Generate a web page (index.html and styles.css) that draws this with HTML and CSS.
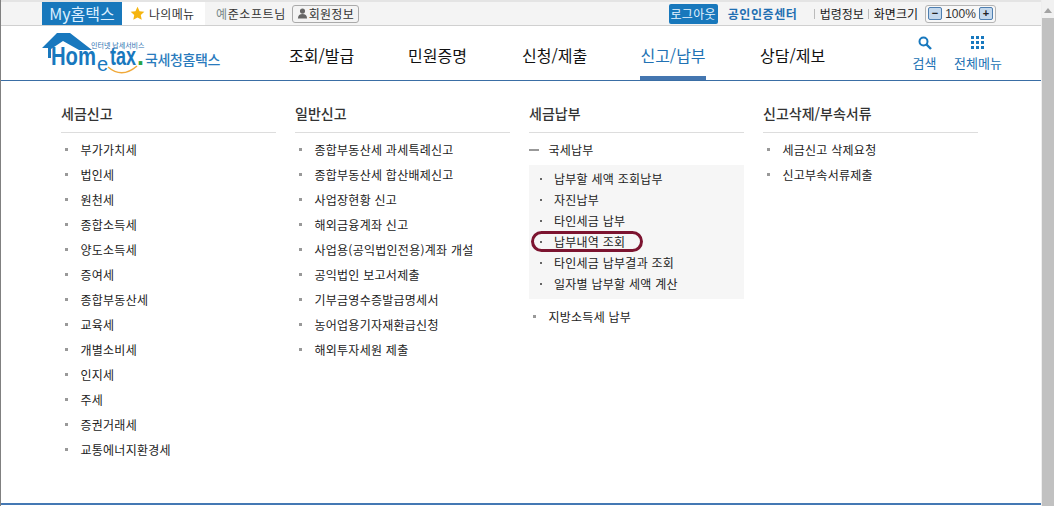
FILE: index.html
```html
<!DOCTYPE html>
<html lang="ko">
<head>
<meta charset="utf-8">
<title>국세청 홈택스</title>
<link rel="stylesheet" href="styles.css">
</head>
<body>
<div class="window">
  <div class="page">
    <div class="topbar">
      <div class="top-left">
        <a class="my-tab">My홈택스</a>
        <a class="fav-tab">
          <svg class="star" viewBox="0 0 16 16" width="15" height="15"><path d="M8 .8l2.2 4.7 5.1.6-3.8 3.5 1 5.1L8 12.2l-4.5 2.5 1-5.1L.7 6.1l5.1-.6z" fill="#f5b50f"/></svg>
          <span>나의메뉴</span>
        </a>
        <span class="user"><b class="user-initial">예</b>준소프트님</span>
        <a class="info-btn">
          <svg viewBox="0 0 12 12" width="11" height="11"><circle cx="6" cy="3.4" r="2.8" fill="#666"/><path d="M1 11.5c0-3.6 2-5 5-5s5 1.4 5 5z" fill="#666"/></svg>
          <span>회원정보</span>
        </a>
      </div>
      <div class="top-right">
        <a class="logout">로그아웃</a>
        <a class="cert">공인인증센터</a>
        <a class="law">법령정보</a>
        <span class="zoom-label">화면크기</span>
        <div class="zoom-box">
          <span class="zoom-btn">−</span>
          <span class="zoom-val">100%</span>
          <span class="zoom-btn">+</span>
        </div>
      </div>
    </div>

    <header class="header">
      <a class="logo">
        <svg class="logo-roof" viewBox="0 0 100 46" width="100" height="46">
          <path d="M2 16 L17 1 H30 L52 18 H39 L23 9 L11 17 V26 H8 V16 Z" fill="#1878be"/>
          <path d="M68 35 q14 12 29 -1" fill="none" stroke="#f0a93a" stroke-width="1.5"/>
        </svg>
        <span class="logo-small">인터넷 납세서비스</span>
        <span class="logo-home">Hom</span>
        <span class="logo-e">e</span>
        <span class="logo-tax">tax</span>
        <span class="logo-dot">.</span>
        <span class="logo-kr">국세청홈택스</span>
      </a>
      <nav class="gnb">
        <a class="gnb-item g1">조회/발급</a>
        <a class="gnb-item g2">민원증명</a>
        <a class="gnb-item g3">신청/제출</a>
        <a class="gnb-item g4 active">신고/납부</a>
        <a class="gnb-item g5">상담/제보</a>
      </nav>
      <div class="tools">
        <a class="tool t-search">
          <svg viewBox="0 0 14 14" width="14" height="14"><circle cx="5.5" cy="5.5" r="4" fill="none" stroke="#1878be" stroke-width="2"/><path d="M8.5 8.5L13 13" stroke="#1878be" stroke-width="2.4"/></svg>
          <span>검색</span>
        </a>
        <a class="tool t-all">
          <svg viewBox="0 0 14 14" width="14" height="14" fill="#1878be"><rect x="0" y="0" width="3" height="3"/><rect x="5" y="0" width="3" height="3"/><rect x="10" y="0" width="3" height="3"/><rect x="0" y="5" width="3" height="3"/><rect x="5" y="5" width="3" height="3"/><rect x="10" y="5" width="3" height="3"/><rect x="0" y="10" width="3" height="3"/><rect x="5" y="10" width="3" height="3"/><rect x="10" y="10" width="3" height="3"/></svg>
          <span>전체메뉴</span>
        </a>
      </div>
    </header>

    <main class="menu">
      <section class="col">
        <h2>세금신고</h2>
        <ul class="list">
          <li>부가가치세</li><li>법인세</li><li>원천세</li><li>종합소득세</li><li>양도소득세</li><li>증여세</li><li>종합부동산세</li><li>교육세</li><li>개별소비세</li><li>인지세</li><li>주세</li><li>증권거래세</li><li>교통에너지환경세</li>
        </ul>
      </section>
      <section class="col">
        <h2>일반신고</h2>
        <ul class="list">
          <li>종합부동산세 과세특례신고</li><li>종합부동산세 합산배제신고</li><li>사업장현황 신고</li><li>해외금융계좌 신고</li><li>사업용(공익법인전용)계좌 개설</li><li>공익법인 보고서제출</li><li>기부금영수증발급명세서</li><li>농어업용기자재환급신청</li><li>해외투자세원 제출</li>
        </ul>
      </section>
      <section class="col">
        <h2>세금납부</h2>
        <ul class="list">
          <li class="open">국세납부
            <ul class="sub">
              <li>납부할 세액 조회납부</li><li>자진납부</li><li>타인세금 납부</li><li class="marked">납부내역 조회</li><li>타인세금 납부결과 조회</li><li>일자별 납부할 세액 계산</li>
            </ul>
          </li>
          <li>지방소득세 납부</li>
        </ul>
      </section>
      <section class="col">
        <h2>신고삭제/부속서류</h2>
        <ul class="list">
          <li>세금신고 삭제요청</li><li>신고부속서류제출</li>
        </ul>
      </section>
    </main>
    <div class="bottom-line"></div>
  </div>
  <div class="scrollbar">
    <div class="sb-arrow"></div>
    <div class="sb-thumb"></div>
  </div>
</div>
</body>
</html>
```
FILE: styles.css
```css
*, *::before, *::after { box-sizing: border-box; }
html, body { margin: 0; padding: 0; height: 100%; overflow: hidden; background: #fff; }
body { font-family: "Noto Sans CJK KR", "Liberation Sans", sans-serif; font-size: 12px; color: #222; }
a { color: inherit; text-decoration: none; }
ul { list-style: none; margin: 0; padding: 0; }

.window { display: flex; width: 1054px; height: 506px; border-left: 1px solid #808080; }
.page { width: 1041px; display: flex; flex-direction: column; border-right: 1px solid #eee; }

/* top bar */
.topbar { height: 26px; flex: none; background: #f4f4f4; border-top: 2px solid #e4e4e4; border-bottom: 1px solid #d0d0d0; display: flex; align-items: stretch; justify-content: space-between; padding-left: 41px; padding-right: 45px; }
.top-left, .top-right { display: flex; align-items: center; }
.my-tab { width: 80px; height: 23px; background: #1878bc; color: #dcefff; font-size: 16px; line-height: 23px; text-align: center; }
.fav-tab { width: 83px; height: 23px; background: #fff; display: flex; align-items: center; padding-left: 8px; gap: 4px; font-size: 12px; letter-spacing: 0.3px; color: #333; }
.star { display: block; }
.user { margin-left: 11px; letter-spacing: 0.6px; color: #333; }
.user-initial { font-weight: 400; color: #7a8a8a; }
.info-btn { margin-left: 6px; height: 18px; width: 67px; border: 1px solid #aaa; border-radius: 3px; background: #f4f4f4; display: flex; align-items: center; justify-content: center; gap: 1px; letter-spacing: 0.3px; color: #333; }
.logout { width: 49px; height: 20px; background: #1878bc; color: #e6f3ff; border-radius: 2px; text-align: center; line-height: 20px; letter-spacing: 0.3px; }
.cert { margin-left: 10px; color: #1f6fb2; font-weight: 700; letter-spacing: 0.6px; width: 86px; }
.law { padding-left: 5px; border-left: 1px solid #bbb; height: 10px; display: flex; align-items: center; }
.zoom-label { margin-left: 4px; padding-left: 5px; border-left: 1px solid #bbb; height: 10px; display: flex; align-items: center; color: #111; }
.zoom-box { margin-left: 7px; width: 71px; height: 18px; border: 1px solid #b4b4b4; border-radius: 3px; display: flex; align-items: center; justify-content: space-between; padding: 0 2px; background: #f8f8f8; }
.zoom-btn { width: 14px; height: 13px; background: #c4d8ec; border: 1px solid #4f7fb0; border-radius: 2px; font-size: 11px; line-height: 10px; text-align: center; font-family: "Liberation Sans", sans-serif; font-weight: 700; color: #222; }
.zoom-val { font-family: "Liberation Sans", sans-serif; font-size: 12px; color: #333; }

/* header */
.header { position: relative; height: 55px; border-bottom: 1px solid #3a6ea5; flex: none; }
.logo { position: absolute; left: 39px; top: 6px; width: 190px; height: 48px; display: block; z-index: 1; }
.logo-roof { position: absolute; left: 0; top: 0; }
.logo-small { position: absolute; left: 51px; top: 10px; font-size: 7px; line-height: 7px; color: #2a6fb0; white-space: nowrap; }
.logo-home { position: absolute; left: 11px; top: 17px; font: 700 25px/14px "Liberation Sans", sans-serif; color: #1878be; transform: scaleX(0.81); transform-origin: left center; }
.logo-e { position: absolute; left: 57px; top: 20px; font: 400 20px/24px "Liberation Sans", sans-serif; color: #1878be; }
.logo-tax { position: absolute; left: 70px; top: 17px; font: 700 25px/14px "Liberation Sans", sans-serif; color: #1878be; transform: scaleX(0.72); transform-origin: left center; }
.logo-dot { position: absolute; left: 97px; top: 17px; font: 700 25px/14px "Liberation Sans", sans-serif; color: #2aa344; }
.logo-kr { position: absolute; left: 105px; top: 17px; font-size: 14px; line-height: 20px; font-weight: 500; color: #2a7bbd; letter-spacing: -0.4px; white-space: nowrap; }

.gnb { position: absolute; left: 0; top: 0; width: 100%; height: 100%; }
.gnb-item { position: absolute; top: 0; height: 54px; padding-top: 17px; font-size: 16px; line-height: 24px; color: #111; white-space: nowrap; text-align: center; }
.g1 { left: 288px; }
.g2 { left: 407px; }
.g3 { left: 521px; }
.g4 { left: 639px; width: 66px; color: #2272b4; border-bottom: 4px solid #4476b0; }
.g5 { left: 759px; }

.tools { position: absolute; left: 0; top: 0; }
.tool { position: absolute; top: 10px; display: flex; flex-direction: column; align-items: center; color: #2272b4; font-size: 13px; line-height: 18px; white-space: nowrap; gap: 4px; }
.t-search { left: 911px; width: 25px; }
.t-all { left: 953px; width: 48px; }

/* mega menu */
.menu { flex: 1; display: flex; padding: 23px 0 0 60px; gap: 19px; }
.col { width: 215px; flex: none; }
.col h2 { margin: 0; height: 29px; border-bottom: 1px solid #ddd; font-size: 14px; font-weight: 500; line-height: 18px; color: #333; }
.list { padding-top: 4px; }
.list > li { position: relative; min-height: 25px; padding-left: 19.5px; line-height: 25px; letter-spacing: 0.25px; color: #222; }
.list > li::before { content: ""; position: absolute; left: 4px; top: 11px; width: 3px; height: 3px; background: #999; }
.list > li.open::before { left: 0; top: 12px; width: 10px; height: 2px; background: #999; }
.sub { margin: 3px 0 5px -19.5px; background: #f6f6f6; padding: 3px 0 5px; }
.sub li { position: relative; height: 21px; line-height: 21px; padding-left: 25px; }
.sub li::before { content: ""; position: absolute; left: 11px; top: 10px; width: 2px; height: 2px; background: #666; }
.sub li.marked::after { content: ""; position: absolute; left: 2px; top: 0; width: 112px; height: 21px; border: 3px solid #7c1430; border-radius: 11px; }

.bottom-line { height: 2px; background: #4478b4; margin-bottom: 1px; flex: none; }

/* scrollbar */
.scrollbar { width: 12px; background: #f1f1f1; display: flex; flex-direction: column; }
.sb-arrow { height: 18px; position: relative; }
.sb-arrow::before { content: ""; position: absolute; left: 2px; top: 8px; border: 4px solid transparent; border-top: 0; border-bottom: 5px solid #a3a3a3; }
.sb-thumb { flex: 1; background: #c1c1c1; }
```
